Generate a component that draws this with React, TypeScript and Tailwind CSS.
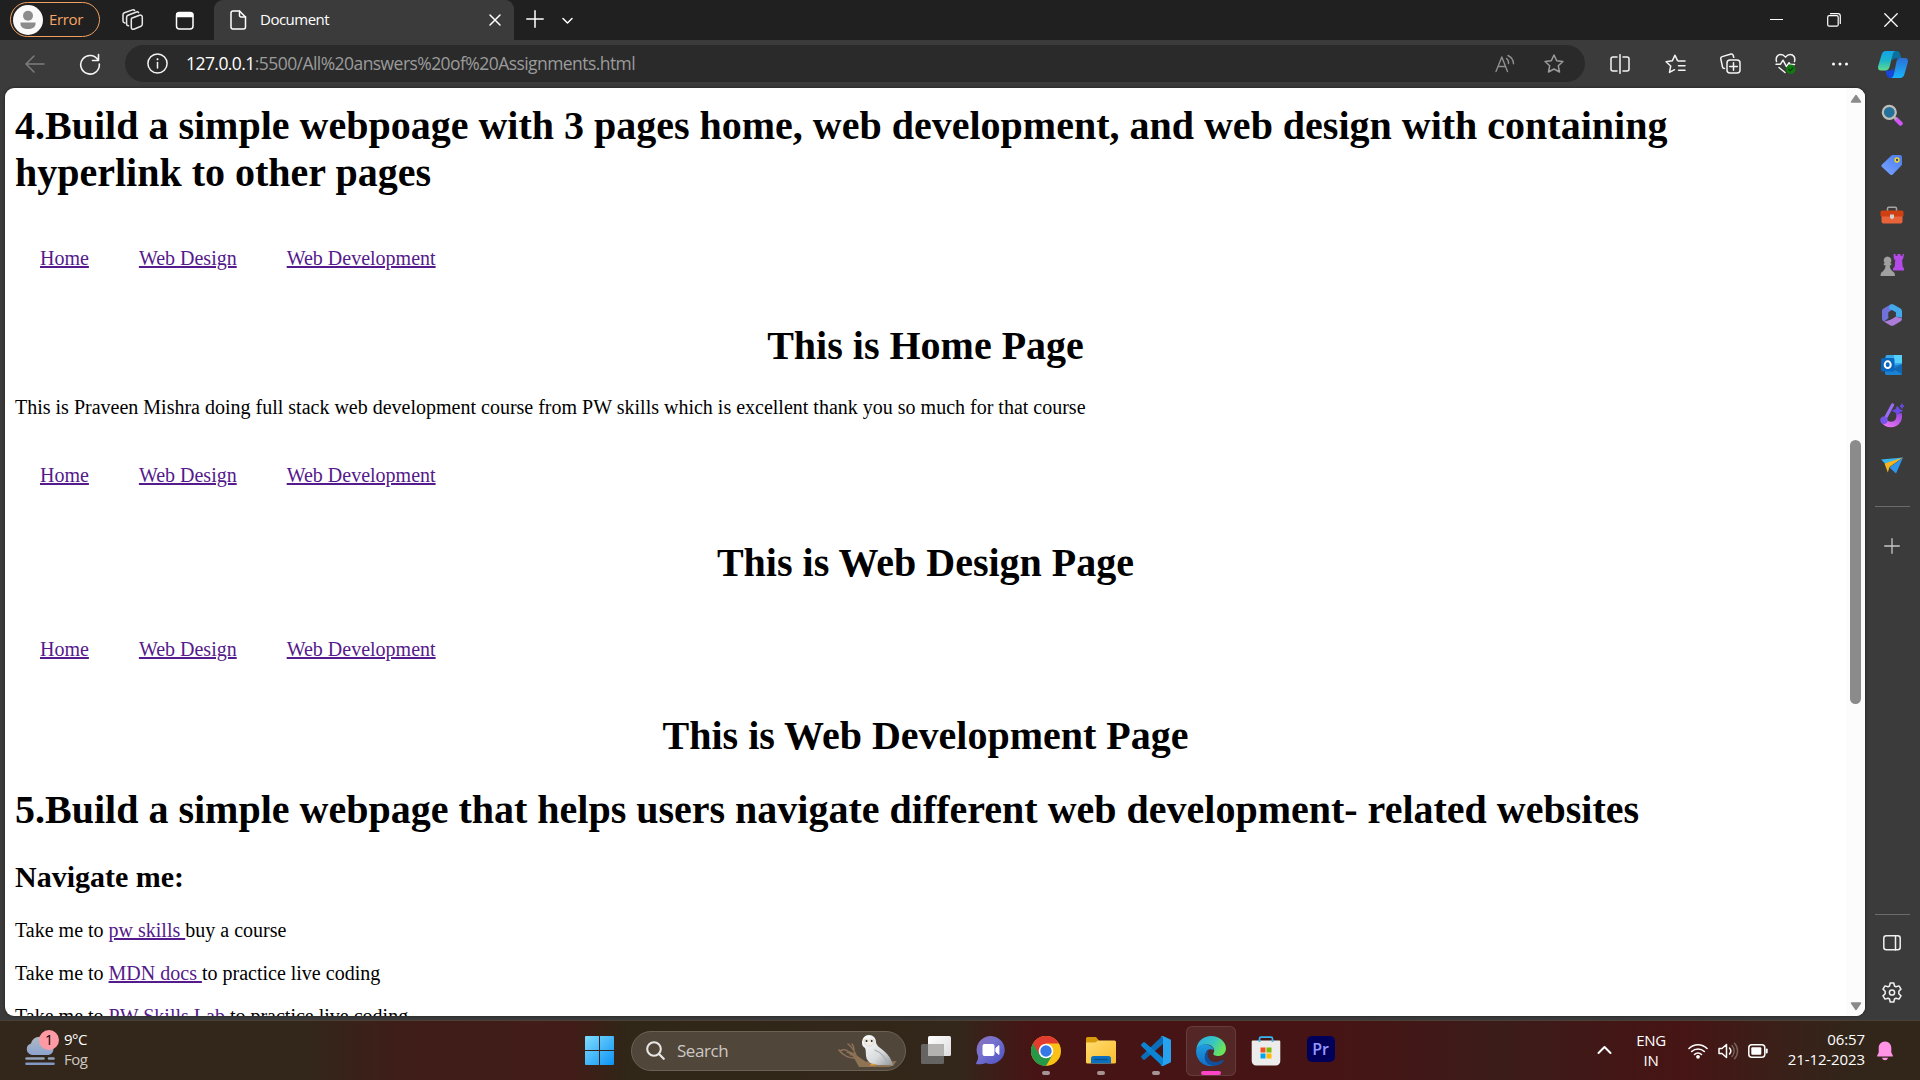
import React from "react";
import type { ReactNode } from "react";

const UI = "font-['Open_Sans','Noto_Sans',sans-serif]";

function Svg({ w, h, children, className = "" }: { w: number; h: number; children: ReactNode; className?: string }) {
  return (
    <svg
      width={w}
      height={h}
      viewBox={`0 0 ${w} ${h}`}
      fill="none"
      stroke="currentColor"
      strokeWidth={1.5}
      strokeLinecap="round"
      strokeLinejoin="round"
      className={`block shrink-0 ${className}`}
    >
      {children}
    </svg>
  );
}

/* ---------- Title bar ---------- */

function TitleBar() {
  return (
    <header className="flex h-10 shrink-0 bg-[#202020] text-white">
      <div className="flex w-[214px] items-center pl-[10px]">
        <div className="mb-px flex h-[35px] w-[90px] items-center rounded-full border-[1.5px] border-[#f0a060] pl-[2px]">
          <Svg w={30} h={30}>
            <circle cx="15" cy="15" r="15" fill="#fafafa" stroke="none" />
            <circle cx="15" cy="10.7" r="5" fill="#8c8c8c" stroke="none" />
            <path d="M7.5 17.5h15v1.5c0 3-3.2 5-7.5 5s-7.5-2-7.5-5z" fill="#8c8c8c" stroke="none" />
          </Svg>
          <span className="mb-px ml-[6px] text-[15px] leading-5 tracking-[-0.35px] text-[#f5a566]">Error</span>
        </div>
        <Svg w={22} h={22} className="ml-[22px] text-[#e8e8e8]">
          <path d="M9.5 9.3l8-3.1c1.4-.5 2.8.4 2.8 1.9v7.2c0 .9-.5 1.6-1.3 1.9l-7.2 3c-1.3.5-2.5-.4-2.5-1.7v-7.4c0-.8 0-1.5.2-1.8z" />
          <path d="M6.5 16.8l-.9-.3c-.7-.2-1-.8-1-1.5V8.3c0-1 .6-1.7 1.4-2L14.5 3c.8-.3 1.6 0 2.1.6" />
          <path d="M3 14l-.9-.4c-.7-.2-1.1-.8-1.1-1.5V5.7c0-1 .6-1.7 1.4-2L10.5.9c.9-.3 1.7 0 2.1.6" />
        </Svg>
        <Svg w={20} h={20} className="mt-px ml-[31px]">
          <rect x="1.5" y="1.5" width="16.500" height="16.500" rx="3" />
          <path d="M2 2.500h15.500v3H2z" fill="#fff" />
        </Svg>
      </div>
      <div className="flex w-[300px] items-center rounded-t-[9px] bg-[#3b3b3b] pl-4">
        <Svg w={17} h={20}>
          <path d="M3 1h6.500l6 6v10a2 2 0 0 1-2 2H3a2 2 0 0 1-2-2V3a2 2 0 0 1 2-2z" />
          <path d="M9.500 1v4.500a1.500 1.500 0 0 0 1.500 1.500h4.500" />
        </Svg>
        <span className="mb-[2px] ml-[13px] text-[15px] leading-5 tracking-[-0.5px]">Document</span>
        <Svg w={12} h={12} className="mr-[13px] ml-auto">
          <path d="M1 1l10 10M11 1L1 11" />
        </Svg>
      </div>
      <Svg w={18} h={18} className="mt-[10px] ml-[12px]">
        <path d="M9 .8v16.400M.8 9h16.400" />
      </Svg>
      <Svg w={11} h={8} className="mt-[17px] ml-[18px]">
        <path d="M1 1.500l4.500 4.500L10 1.500" />
      </Svg>
      <div className="mr-[22px] ml-auto flex h-[39px] items-center">
        <Svg w={13} h={13}>
          <path d="M0 6.500h13" strokeWidth="1.200" />
        </Svg>
        <Svg w={14} h={14} className="ml-[44px]">
          <rect x=".7" y="2.700" width="10.500" height="10.500" rx="1.500" strokeWidth="1.200" />
          <path d="M3.500 .7H11a2.300 2.300 0 0 1 2.300 2.300v7.500" strokeWidth="1.200" />
        </Svg>
        <Svg w={14} h={14} className="ml-[43px]">
          <path d="M.8 .8l12.400 12.400M13.200 .8L.8 13.200" strokeWidth="1.300" />
        </Svg>
      </div>
    </header>
  );
}

/* ---------- Address bar ---------- */

const STAR = "M10 1l2.700 5.700 6.200.8-4.600 4.300 1.200 6.200L10 15l-5.500 3 1.200-6.200L1.100 7.500l6.200-.8z";

function Copilot() {
  return (
    <Svg w={30} h={27}>
      <defs>
        <linearGradient id="cpA" x1="0" y1="0" x2="0" y2="1">
          <stop offset="0" stopColor="#12a5e8" />
          <stop offset=".5" stopColor="#1cb5c9" />
          <stop offset="1" stopColor="#63dc8c" />
        </linearGradient>
        <linearGradient id="cpB" x1="0" y1="0" x2="0" y2="1">
          <stop offset="0" stopColor="#2b6fd6" />
          <stop offset="1" stopColor="#18b4fa" />
        </linearGradient>
      </defs>
      <path d="M13 0h6c2 0 2.600 1.500 3.200 3.400L23.500 7.500h-6c-2 0-3 1-3.600 3z" fill="#0c6f9e" stroke="none" />
      <path d="M17 27h-5c-2 0-2.900-1.200-3.500-3.200L7.300 19.500h4c2.500 0 3.400-1 4-3z" fill="#1647d8" stroke="none" />
      <path d="M8 0h10c-2 0-2.700 1.500-3.300 3.500L11.500 16c-.7 2.200-1.800 3.500-4 3.500H3C.5 19.500-.4 17.500.2 15L3.500 4C4.300 1.300 5.500 0 8 0z" fill="url(#cpA)" stroke="none" />
      <path d="M22 27H12.500c2 0 2.700-1.500 3.300-3.500L18.500 10.500c.7-2.200 1.700-3.500 4-3.500H27c2.500 0 3.400 2 2.800 4.500L26.500 23c-.8 2.700-2 4-4.500 4z" fill="url(#cpB)" stroke="none" />
    </Svg>
  );
}

function AddressBar() {
  return (
    <div className="flex h-12 shrink-0 items-center bg-[#3b3b3b] pb-px text-[#f4f4f4]">
      <Svg w={20} h={18} className="ml-[25px] text-[#7d7d7d]">
        <path d="M19 9H1M9 1L1 9l8 8" />
      </Svg>
      <Svg w={22} h={22} className="ml-[34px]">
        <path d="M19.300 7.500A9.300 9.300 0 1 0 20.300 11M19.500 1.500v6h-6" strokeWidth="1.600" />
      </Svg>
      <div className="ml-6 flex h-[37px] w-[1460px] items-center rounded-full bg-[#2a2a2a] pl-[22px]">
        <Svg w={21} h={21}>
          <circle cx="10.500" cy="10.500" r="9.600" />
          <path d="M10.500 9.500V15" />
          <circle cx="10.500" cy="6.200" r="1" fill="#fff" stroke="none" />
        </Svg>
        <span className="mb-px ml-[18px] text-[17.500px] leading-6 tracking-[-0.56px] text-[#9b9b9b]">
          <span className="text-white">127.0.0.1</span>:5500/All%20answers%20of%20Assignments.html
        </span>
        <Svg w={20} h={19} className="mr-[29px] ml-auto text-[#8f8f8f]">
          <path d="M1 17.500L6.800 3l5.700 14.500M3 12.500h7.500M11.500 4.500c1.700 1.300 2.300 3 2 5M13 1.500c3.500 1.700 5.500 4.800 5.500 8.300" strokeWidth="1.400" />
        </Svg>
        <Svg w={20} h={19} className="mr-[21px] text-[#9b9b9b]">
          <path d={STAR} />
        </Svg>
      </div>
      <Svg w={20} h={20} className="ml-[25px]">
        <path d="M7 3H3a2 2 0 0 0-2 2v10a2 2 0 0 0 2 2h4M13 3h4a2 2 0 0 1 2 2v10a2 2 0 0 1-2 2h-4M10 .7v18.600" />
      </Svg>
      <Svg w={21} h={20} className="ml-[35px]">
        <path d="M13.500 7L12.500 6.600 10 1.200 7.300 6.800l-6.200.9 4.600 4.300-1.200 6.400 5-2.700M13.500 7H20M13.500 11.700H20M13.500 16.300H20" />
      </Svg>
      <Svg w={21} h={21} className="ml-[34px]">
        <path d="M4.500 15.500c-1.200 0-1.800-.6-2-1.500L.8 5.800c-.2-1 .4-1.900 1.400-2.200L11 1c1-.2 1.800.3 2.200 1.300l.5 2" />
        <rect x="7" y="7" width="13" height="13" rx="3" />
        <path d="M13.500 9.700v7.600M9.700 13.500h7.600" />
      </Svg>
      <Svg w={22} h={21} className="ml-[34px]">
        <path d="M1.500 8.500C.4 4.500 2.500 1.500 5.800 1.500c2 0 3.400 1 4.700 2.600C11.800 2.500 13.200 1.500 15.200 1.500c3.300 0 5.400 3 4.300 7M1 11.200h4.500l2.500-4 3.500 6.500 2.500-4 1.200 1.700h4.300M4 14.500l6 5" />
        <circle cx="15.800" cy="16.300" r="4.700" fill="#0f7b0f" stroke="none" />
        <path d="M13.700 16.400l1.500 1.500 2.700-2.900" stroke="#063f06" strokeWidth="1.200" />
      </Svg>
      <Svg w={18} h={6} className="ml-[34px]">
        <circle cx="2.500" cy="3" r="1.500" fill="#fff" stroke="none" />
        <circle cx="9" cy="3" r="1.500" fill="#fff" stroke="none" />
        <circle cx="15.500" cy="3" r="1.500" fill="#fff" stroke="none" />
      </Svg>
      <div className="mt-px ml-[29px]">
        <Copilot />
      </div>
    </div>
  );
}

/* ---------- Web page ---------- */

function Heading({ children, className = "" }: { children: ReactNode; className?: string }) {
  return <h1 className={`my-[26.800px] text-[40px] leading-[47px] font-bold ${className}`}>{children}</h1>;
}

function PageLink({ children }: { children: ReactNode }) {
  return (
    <a href="#" className="whitespace-pre text-[#551a8b] underline decoration-[1.500px]">
      {children}
    </a>
  );
}

function PageNav() {
  return (
    <nav className="flex gap-[50px] px-[25px] py-[25px]">
      <PageLink>Home</PageLink>
      <PageLink>Web Design</PageLink>
      <PageLink>Web Development</PageLink>
    </nav>
  );
}

function WebPage() {
  return (
    <main className="ml-[5px] flex h-[928px] w-[1860px] overflow-hidden rounded-[9px] bg-white shadow-[0_0_3px_rgba(0,0,0,0.5)]">
      <div className="w-[1841px] px-[10px] pt-[13.600px] font-['Liberation_Serif',serif] text-[20px] leading-[23px] text-black">
        <Heading className="mt-0">
          4.Build a simple webpoage with 3 pages home, web development, and web design with containing hyperlink to other
          pages
        </Heading>
        <PageNav />
        <Heading className="text-center">This is Home Page</Heading>
        <p className="mb-5">
          This is Praveen Mishra doing full stack web development course from PW skills which is excellent thank you so
          much for that course
        </p>
        <PageNav />
        <Heading className="text-center">This is Web Design Page</Heading>
        <PageNav />
        <Heading className="text-center">This is Web Development Page</Heading>
        <Heading>5.Build a simple webpage that helps users navigate different web development- related websites</Heading>
        <h2 className="mb-[25px] text-[30px] leading-[34px] font-bold">Navigate me:</h2>
        <p className="mb-5">
          Take me to <PageLink>pw skills </PageLink>buy a course
        </p>
        <p className="mb-5">
          Take me to <PageLink>MDN docs </PageLink>to practice live coding
        </p>
        <p>
          Take me to <PageLink>PW Skills Lab</PageLink> to practice live coding
        </p>
      </div>
      <div className="flex w-[19px] flex-col items-center bg-[#fcfcfc] pt-[6px] pb-[5px]">
        <Svg w={12} h={10}>
          <path d="M6 1.500L10.500 8h-9z" fill="#8b8b8b" stroke="#8b8b8b" />
        </Svg>
        <div className="mt-[336px] h-[264px] w-[11px] rounded-full bg-[#8b8b8b]" />
        <Svg w={12} h={10} className="mt-auto">
          <path d="M6 8.500L10.500 2h-9z" fill="#8b8b8b" stroke="#8b8b8b" />
        </Svg>
      </div>
    </main>
  );
}

/* ---------- Edge sidebar ---------- */

function Cell({ children }: { children: ReactNode }) {
  return <div className="flex h-[50px] items-center justify-center">{children}</div>;
}

function Sidebar() {
  return (
    <aside className="flex h-full w-[54px] flex-col pt-[2px] text-[#f0f0f0]">
      <Cell>
        <Svg w={22} h={22}>
          <path d="M15.500 15.500l4 4" stroke="#d455f5" strokeWidth="4.500" />
          <path d="M12 12l2.500 2.500" stroke="#aaa" strokeWidth="2.500" />
          <circle cx="8.300" cy="8.300" r="6.500" fill="#24719c" stroke="#c0bcb8" strokeWidth="2.200" />
        </Svg>
      </Cell>
      <Cell>
        <Svg w={22} h={22}>
          <defs>
            <linearGradient id="tag" x1="1" y1="0" x2="0" y2="1">
              <stop offset="0" stopColor="#4a7cf0" />
              <stop offset="1" stopColor="#7aa5ff" />
            </linearGradient>
          </defs>
          <path d="M12 1h7a2 2 0 0 1 2 2v7c0 .6-.2 1-.6 1.500l-8.700 9c-.8.8-1.800.8-2.600 0L1 13c-.8-.8-.8-1.800 0-2.600l9.500-8.800c.4-.4 1-.6 1.500-.6z" fill="url(#tag)" stroke="none" />
          <circle cx="16" cy="6" r="1.900" stroke="#f7d51d" strokeWidth="1.500" fill="#30407a" />
        </Svg>
      </Cell>
      <Cell>
        <Svg w={24} h={18}>
          <path d="M7.500 5V2.500c0-.8.500-1.300 1.300-1.300h6.400c.8 0 1.300.5 1.300 1.300V5" stroke="#a5a5a5" />
          <path d="M1.500 9h21v6.500a2 2 0 0 1-2 2h-17a2 2 0 0 1-2-2z" fill="#e8623a" stroke="none" />
          <path d="M2 4.500h20a1.500 1.500 0 0 1 1.500 1.500v3.500a1 1 0 0 1-1 1h-21a1 1 0 0 1-1-1V6A1.500 1.500 0 0 1 2 4.500z" fill="#cf4112" stroke="none" />
          <path d="M10 8.500h4V12l-2 1.300-2-1.300z" fill="#d0d0d0" stroke="none" />
        </Svg>
      </Cell>
      <Cell>
        <Svg w={24} h={24}>
          <path d="M13.500 1h2v1.800h2V1h3v1.800h2V1H24l-1 5.500h-1l.7 7 1.300 2v2H13v-2l1.700-2 .6-7H14z" fill="#b44be8" stroke="none" />
          <path d="M7.500 3.500a4 4 0 0 1 2.800 6.800h1v2H9.800c0 3 1 4.500 2.700 6 1.500.7 2.500 2 2.500 4.700H.5c0-2.700 1-4 2.500-4.700 1.500-1.500 2.500-3 2.500-6H3.800v-2h1A4 4 0 0 1 7.500 3.500z" fill="#a0a0a0" stroke="none" />
        </Svg>
      </Cell>
      <Cell>
        <Svg w={22} h={22}>
          <path d="M9.500.6L3 4.300C1.700 5 1 6 1 7.500v7c0 1.500.8 2.500 2 3.200L7.500 14V8.500L13.500 4 10.800.6z" fill="#6f72d8" stroke="none" />
          <path d="M9.500.6c1-.6 2-.6 3 0L19 4.300c1.300.7 2 1.700 2 3.200v6.200l-6.300-1.200V8.300L7.500 4.500z" fill="#42a9ea" stroke="none" />
          <path d="M3 17.700l6.500 3.700c1 .6 2 .6 3 0L19 17.700c1.300-.7 2-1.700 2-3.200l-6.300-2-5.200 3.200z" fill="#ad7bd8" stroke="none" />
          <path d="M7.500 8.300L11 6.200l3.700 2.100v4.200L11 14.700l-3.500-2.200z" fill="#3b3b3b" stroke="none" />
        </Svg>
      </Cell>
      <Cell>
        <Svg w={22} h={22}>
          <rect x="4.500" y="1" width="16.500" height="16" rx="1.500" fill="#38a9e8" stroke="none" />
          <path d="M13 1h8v8h-8z" fill="#55d0fb" stroke="none" />
          <path d="M4 13l17-3v9.500a1.500 1.500 0 0 1-1.500 1.500h-14A1.500 1.500 0 0 1 4 19.500z" fill="#1b83d3" stroke="none" />
          <path d="M21 10v10l-9-5z" fill="#1267b4" stroke="none" />
          <rect x="0" y="4" width="13.500" height="13.500" rx="1.500" fill="#0b66bd" stroke="none" />
          <ellipse cx="6.700" cy="10.700" rx="3" ry="3.400" stroke="#fff" strokeWidth="2" />
        </Svg>
      </Cell>
      <Cell>
        <Svg w={24} h={25}>
          <defs>
            <linearGradient id="dsg" x1="1" y1="0" x2="0" y2="1">
              <stop offset="0" stopColor="#9f4be0" />
              <stop offset="1" stopColor="#e874f4" />
            </linearGradient>
          </defs>
          <path d="M19 10.500c1.300 6-2 11-8 11-3.500 0-6-1.500-7.500-4" stroke="url(#dsg)" strokeWidth="5.500" strokeLinecap="butt" />
          <path d="M12.500 2L5.500 15" stroke="#9a6cf5" strokeWidth="3.200" />
          <circle cx="4" cy="17.300" r="3.700" fill="#7654ea" stroke="none" />
          <path d="M17.500 3.500l2 3 3 1.300-3 1.400L17.500 12l-2-2.800-3-1.400 3-1.300zM22 1l.7 1.500 1.300.6-1.300.7L22 5.500l-.7-1.700-1.300-.7 1.300-.6z" fill="#6a4be8" stroke="#6a4be8" strokeWidth=".8" />
        </Svg>
      </Cell>
      <Cell>
        <Svg w={22} h={17}>
          <path d="M0 2.500L22 .5 6.500 9z" fill="#38b6ee" stroke="none" />
          <path d="M3.500 6.500L22 .5 8.500 10 6.800 15.500z" fill="#f4b51e" stroke="none" />
          <path d="M22 .5L8.500 10.500l6.500 6z" fill="#2e95ec" stroke="none" />
        </Svg>
      </Cell>
      <div className="mx-auto mt-[16px] h-px w-[35px] bg-[#6b6b6b]" />
      <Svg w={16} h={16} className="mx-auto mt-[31px] text-[#c8c8c8]">
        <path d="M8 .7v14.600M.7 8h14.600" strokeWidth="1.300" />
      </Svg>
      <div className="mx-auto mt-auto h-px w-[35px] bg-[#6b6b6b]" />
      <Svg w={18} h={16} className="mx-auto mt-[20px]">
        <rect x=".8" y=".8" width="16.400" height="14" rx="2.500" />
        <path d="M12.500 1v14" />
      </Svg>
      <Svg w={22} h={22} className="mx-auto mt-[31px] mb-[16px]">
        <path d="M9.200 1h3.600l.7 3 1.500.8 3-.9 2 3.200-2.200 2.200v2.400l2.200 2.200-2 3.200-3-.9-1.500.8-.7 3H9.200l-.7-3-1.500-.8-3 .9-2-3.200 2.200-2.200V9.300L2 7.100l2-3.200 3 .9L8.500 4z" />
        <circle cx="11" cy="10.500" r="2.600" />
      </Svg>
    </aside>
  );
}

/* ---------- Taskbar ---------- */

function Weather() {
  return (
    <div className="relative ml-[25px]">
      <Svg w={30} h={30}>
        <defs>
          <linearGradient id="cloud" x1="0" y1="0" x2="0" y2="1">
            <stop offset="0" stopColor="#aeb9c2" />
            <stop offset="1" stopColor="#8da3cf" />
          </linearGradient>
        </defs>
        <path d="M7 19a6.500 6 0 0 1-1-11.500A9.500 9 0 0 1 24 6.500 6.500 6.500 0 0 1 23.500 19z" fill="url(#cloud)" stroke="none" />
        <path d="M1.500 22.500h17M24 22.500h4.500" stroke="#93a4b8" strokeWidth="2.600" />
        <path d="M1.500 27.700h27" stroke="#8297c4" strokeWidth="2.600" />
      </Svg>
      <span className="absolute -top-[6px] left-[14px] flex size-5 items-center justify-center rounded-full bg-[#ff99a4] text-[14px] leading-none text-black">
        1
      </span>
    </div>
  );
}

function Owl() {
  return (
    <Svg w={60} h={34}>
      <defs>
        <linearGradient id="owl" x1="0" y1="0" x2="1" y2="1">
          <stop offset="0" stopColor="#ffffff" />
          <stop offset=".6" stopColor="#d9dbdd" />
          <stop offset="1" stopColor="#8d9296" />
        </linearGradient>
      </defs>
      <path d="M22 33l-5-9c-1.500-3-4.500-4.500-8-5.500l2-1.500c4 .8 7 2 9.500 5l8 5.500 14 1 17-1.500-3 4.500-5 1.500z" fill="#8f7355" stroke="none" />
      <path d="M18 24c-5 .3-12-2-16-8M14 21C11 16 8 14 3 17M19 22c-1-5-3-8-8-12M17 16c0-2 0-4-2-6" stroke="#8d7058" strokeWidth="1.600" />
      <path d="M25 9c0-5 3-8 7-8s7 3 7 7c0 3 3 5 8 9 5 4 8 9 9 15-5-2-8-.5-12-1-8 0-14-2-15-9-.3-4 0-6-1-8-2-1-3-3-3-5z" fill="url(#owl)" stroke="none" />
      <path d="M38 16c5 2 10 7 13 14" stroke="#a9adb0" strokeWidth="1.200" />
      <path d="M27 6c1.500-1.500 3.500-1 4.500.8 1-1.800 4-2.300 5.500-.8 0 4-2.500 6-5.500 6S27 9.500 27 6z" fill="#f1eee8" stroke="#d8ccb9" strokeWidth=".6" />
      <circle cx="29.500" cy="7" r="1" fill="#222" stroke="none" />
      <circle cx="34.700" cy="7" r="1" fill="#222" stroke="none" />
      <path d="M32.500 31.500c1.500-2.500 4.500-2.500 6.500 0z" fill="#e59a2f" stroke="none" />
    </Svg>
  );
}

function Task({ children, running = false, active = false }: { children: ReactNode; running?: boolean; active?: boolean }) {
  return (
    <div
      className={`relative mx-[2.500px] flex h-[50px] w-[50px] items-center justify-center rounded-[6px] border ${
        active ? "border-white/10 bg-white/8" : "border-transparent"
      }`}
    >
      {children}
      {running && <span className="absolute bottom-0 left-5 h-1 w-2 rounded-full bg-[#a79393]" />}
      {active && <span className="absolute bottom-0 left-[14px] h-1 w-5 rounded-full bg-[#ff45c8]" />}
    </div>
  );
}

function TaskApps() {
  return (
    <div className="flex items-center">
      <Task>
        <Svg w={30} h={28} className="mb-[2px]">
          <defs>
            <linearGradient id="tvA" x1="0" y1="0" x2="1" y2="1">
              <stop offset="0" stopColor="#fff" />
              <stop offset="1" stopColor="#dcdcdc" />
            </linearGradient>
          </defs>
          <rect x="7" y="0" width="23" height="20" rx="1.500" fill="url(#tvA)" stroke="none" />
          <rect x="0" y="8" width="23" height="20" rx="1.500" fill="#666462" stroke="none" />
          <path d="M7 8h14.500A1.500 1.500 0 0 1 23 9.500V20H7z" fill="#b4b2b0" stroke="none" />
        </Svg>
      </Task>
      <Task>
        <Svg w={29} h={29}>
          <defs>
            <linearGradient id="chat" x1="0" y1="0" x2="1" y2="1">
              <stop offset="0" stopColor="#8f6fb5" />
              <stop offset=".4" stopColor="#7672cf" />
              <stop offset="1" stopColor="#4c4fc0" />
            </linearGradient>
          </defs>
          <path d="M15 0a14 14 0 1 1-5.500 27c-2.500 1.300-5.500 1.500-8.500 1.300-1 0-1.200-1-.6-1.700C1.500 25 2 23 2.200 20.500A14 14 0 0 1 15 0z" fill="url(#chat)" stroke="none" />
          <rect x="6.500" y="8" width="12" height="12" rx="2" fill="#fff" stroke="none" />
          <path d="M20 12l3-2.500v9L20 16z" fill="#fff" stroke="#fff" strokeWidth=".8" />
        </Svg>
      </Task>
      <Task running>
        <Svg w={30} h={30}>
          <circle cx="15" cy="15" r="15" fill="#fbc116" stroke="none" />
          <path d="M15 15L2 7.500A15 15 0 0 0 15 30l6.500-11.300z" fill="#279847" stroke="none" />
          <path d="M2 7.500A15 15 0 0 1 28 7.500H15L8.500 18.700z" fill="#e33b2e" stroke="none" />
          <circle cx="15" cy="15" r="7.300" fill="#fff" stroke="none" />
          <circle cx="15" cy="15" r="5.700" fill="#3578e5" stroke="none" />
        </Svg>
      </Task>
      <Task running>
        <Svg w={30} h={27}>
          <defs>
            <linearGradient id="fold" x1="0" y1="0" x2="1" y2="1">
              <stop offset="0" stopColor="#ffdc70" />
              <stop offset="1" stopColor="#fbbd2c" />
            </linearGradient>
          </defs>
          <path d="M0 1.500A1.500 1.500 0 0 1 1.500 0H10l3 3.500V9H0z" fill="#d99b0c" stroke="none" />
          <path d="M0 5.500h9L12.500 3.500h16A1.500 1.500 0 0 1 30 5v20.500a1.500 1.500 0 0 1-1.500 1H1.500a1.500 1.500 0 0 1-1.500-1z" fill="url(#fold)" stroke="none" />
          <path d="M5 26.500v-5A2.500 2.500 0 0 1 7.500 19h15a2.500 2.500 0 0 1 2.500 2.500v5z" fill="#0c6fbf" stroke="none" />
          <path d="M9 22.500h12" stroke="#07528f" strokeWidth="1.300" />
        </Svg>
      </Task>
      <Task running>
        <Svg w={30} h={30}>
          <path d="M22 8L4 23.500c-.6.500-1.300.500-1.900 0L.6 22c-.7-.7-.7-1.500 0-2.200L20.500.7 22 0z" fill="#0a6fb8" stroke="none" />
          <path d="M22 22L4 6.500C3.400 6 2.700 6 2.100 6.500L.6 8c-.7.700-.7 1.500 0 2.200L20.500 29.300 22 30z" fill="#0b84d4" stroke="none" />
          <path d="M22 0l7 3.200c.7.300 1 .8 1 1.500v20.600c0 .7-.3 1.200-1 1.500L22 30c-1 .2-2-.2-2.500-1 1.500.5 2.500 0 2.500-1.500V2.500C22 1 21 .5 19.500 1 20 .2 21-.2 22 0z" fill="#27a2ee" stroke="none" />
        </Svg>
      </Task>
      <Task active>
        <Svg w={30} h={30}>
          <defs>
            <linearGradient id="edA" x1="0" y1="0" x2="1" y2=".4">
              <stop offset="0" stopColor="#2aa9e6" />
              <stop offset=".6" stopColor="#37c6c2" />
              <stop offset="1" stopColor="#6ae45a" />
            </linearGradient>
            <linearGradient id="edB" x1="0" y1="0" x2="0" y2="1">
              <stop offset="0" stopColor="#1f9de0" />
              <stop offset="1" stopColor="#0f6fc6" />
            </linearGradient>
          </defs>
          <path d="M.3 13C1.500 5 7.500 0 15 0c8.500 0 15 6 15 12.500 0 4.500-3.500 7.500-7.500 7.500-3.500 0-6-1.200-5-2.800C19.500 13.500 17 9 11 8.500 6 8 2 10.500.3 13z" fill="url(#edA)" stroke="none" />
          <path d="M.2 13.500C2 9.500 6.500 7.500 11 8.500c4 .9 6.500 3.500 6.800 5.500C11 11 7.500 18 10.500 23c1.800 3.300 4.500 5 8.500 6.300C9 32.500-1 25 .2 13.500z" fill="url(#edB)" stroke="none" />
          <path d="M13.500 14c-5 6 1 14.500 9.500 11.500 2-.6 3.500-1.300 4.500-1.500.5 0 .6.500.3 1C25 29 20 30.500 16 29.500 7 27.500 6.500 17 13.500 14z" fill="#12509b" stroke="none" />
        </Svg>
      </Task>
      <Task>
        <Svg w={30} h={30}>
          <path d="M.7 5.500A1 1 0 0 1 1.700 4.500h26.600a1 1 0 0 1 1 1V25a4.500 4.500 0 0 1-4.500 4.500H5.200A4.500 4.500 0 0 1 .7 25z" fill="#ececec" stroke="none" />
          <path d="M8.500 6V2.700C8.500 1.700 9 1.200 10 1.200h10c1 0 1.500.5 1.500 1.500V6" stroke="#35b8f0" strokeWidth="1.700" strokeLinecap="butt" />
          <path d="M9.500 11.500h5v5h-5z" fill="#f25022" stroke="none" />
          <path d="M15.500 11.500h5v5h-5z" fill="#7fba00" stroke="none" />
          <path d="M9.500 17.500h5v5h-5z" fill="#00a4ef" stroke="none" />
          <path d="M15.500 17.500h5v5h-5z" fill="#ffb900" stroke="none" />
        </Svg>
      </Task>
      <Task>
        <div className="mb-[3px] flex h-[26px] w-7 items-center justify-center rounded-[5px] bg-[#00005b] text-[16px] leading-none font-semibold text-[#9999ff]">
          Pr
        </div>
      </Task>
    </div>
  );
}

function Taskbar() {
  return (
    <footer className="flex h-[60px] shrink-0 items-center border-t border-[#4b4037] bg-[linear-gradient(90deg,#33261a_0px,#33261a_310px,#3f1d19_400px,#421c18_570px,#2f2718_630px,#33261a_960px,#461414_1030px,#461414_1340px,#3b1c19_1500px,#461414_1680px,#3a2018_1780px,#32251a_1850px)] text-[15px] leading-5 text-white">
      <div className="flex w-[560px] items-center">
        <Weather />
        <div className="mb-[3px] ml-[9px] tracking-[-0.5px]">
          <div>9°C</div>
          <div className="text-[#cfc9c4]">Fog</div>
        </div>
      </div>
      <Svg w={29} h={29} className="ml-[25px]">
        <defs>
          <linearGradient id="win" x1="0" y1="0" x2="1" y2="1">
            <stop offset="0" stopColor="#7fdcff" />
            <stop offset="1" stopColor="#0c93f5" />
          </linearGradient>
        </defs>
        <path d="M0 1a1 1 0 0 1 1-1h13v14H0zM15 0h13a1 1 0 0 1 1 1v13H15zM0 15h14v14H1a1 1 0 0 1-1-1zM15 15h14v13a1 1 0 0 1-1 1H15z" fill="url(#win)" stroke="none" />
      </Svg>
      <div className="ml-[17px] flex h-10 w-[275px] items-center rounded-full border border-[#6b6155] bg-[#50463a] pl-[14px]">
        <Svg w={19} h={19} className="text-[#e8e6e4]">
          <circle cx="8" cy="8" r="6.800" strokeWidth="2.100" />
          <path d="M13 13l4.700 4.700" strokeWidth="2.300" />
        </Svg>
        <span className="ml-[12px] text-[17px] tracking-[-0.45px] text-[#cdc8c4]">Search</span>
        <div className="mr-[8px] ml-auto">
          <Owl />
        </div>
      </div>
      <div className="ml-[2px]">
        <TaskApps />
      </div>
      <div className="ml-auto flex items-center">
        <Svg w={15} h={10} className="mb-px">
          <path d="M1.500 8l6-6 6 6" strokeWidth="2" />
        </Svg>
        <div className="mb-[2px] ml-[19px] w-10 text-center tracking-[-0.3px]">
          <div>ENG</div>
          <div>IN</div>
        </div>
        <Svg w={20} h={16} className="ml-[17px]">
          <path d="M1 5.500a12.700 12.700 0 0 1 18 0M3.700 8.500a9 9 0 0 1 12.600 0M6.500 11.500a5 5 0 0 1 7 0" strokeWidth="1.600" />
          <circle cx="10" cy="13.800" r="1.900" fill="#fff" stroke="none" />
        </Svg>
        <Svg w={21} h={18} className="ml-[10px]">
          <path d="M1 6.500h3L8.500 2.500v13L4 11.500H1z" />
          <path d="M11.500 6a4.500 4.500 0 0 1 0 6" />
          <path d="M14 3.500a8 8 0 0 1 0 11M16.500 1.200a11.500 11.500 0 0 1 0 15.600" stroke="#776058" />
        </Svg>
        <Svg w={20} h={14} className="ml-[9px]">
          <rect x=".8" y=".8" width="16" height="12.400" rx="3" />
          <rect x="3.300" y="3.300" width="10" height="7.400" rx="1" fill="#fff" stroke="none" />
          <path d="M18.700 5.500v3" strokeWidth="2" />
        </Svg>
        <div className="mb-[3px] ml-[17px] w-20 text-right tracking-[-0.1px] whitespace-nowrap">
          <div>06:57</div>
          <div>21-12-2023</div>
        </div>
        <Svg w={16} h={20} className="mr-[27px] ml-3 text-[#ff93e6]">
          <path d="M8 .5c4 0 6.300 3 6.300 6.500v4.500l1.500 3c.3.700 0 1-.6 1H.8c-.6 0-.9-.3-.6-1l1.500-3V7C1.700 3.500 4 .5 8 .5zM5 16.800h6c-.5 1.700-1.500 2.500-3 2.500s-2.500-.8-3-2.500z" fill="currentColor" stroke="none" />
        </Svg>
      </div>
    </footer>
  );
}

export default function App() {
  return (
    <div className={`flex h-[1080px] w-[1920px] flex-col overflow-hidden bg-[#3b3b3b] ${UI}`}>
      <TitleBar />
      <AddressBar />
      <div className="flex h-[932px] shrink-0 items-start">
        <WebPage />
        <Sidebar />
      </div>
      <Taskbar />
    </div>
  );
}
